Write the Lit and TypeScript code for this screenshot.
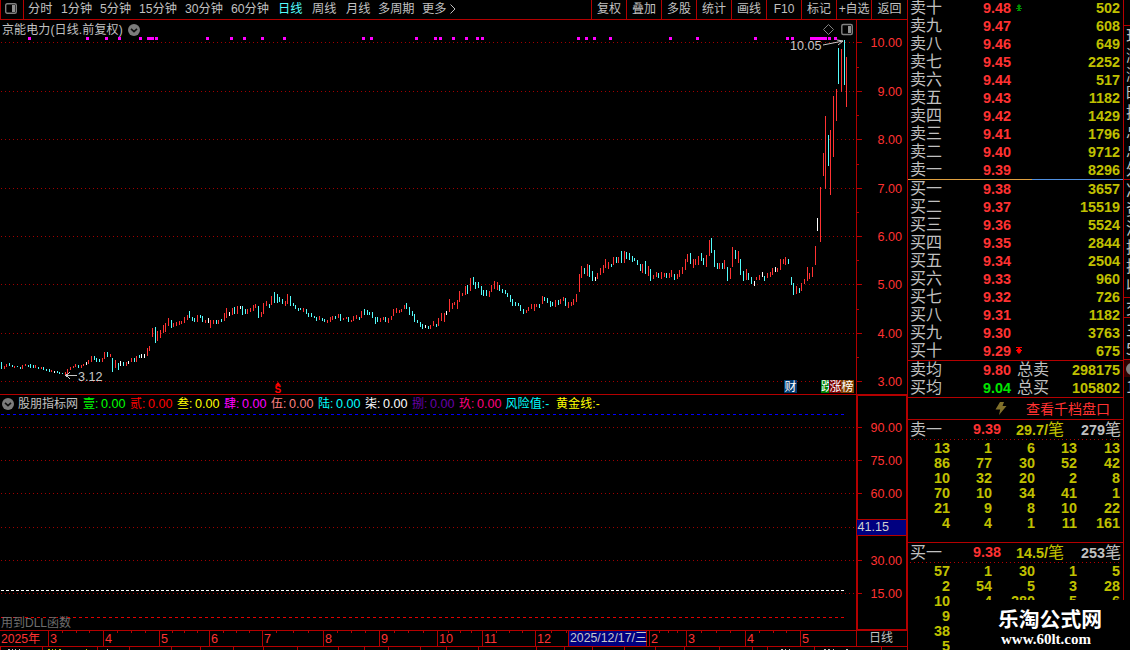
import { LitElement, html, svg, css } from "lit";
import { customElement, property } from "lit/decorators.js";
import { classMap } from "lit/directives/class-map.js";

// x, top, bottom, kind: r = up, c = down, w = flat
const BARS = `
1,362,369,c 4,366,369,r 6,364,367,r 9,363,366,c 12,365,367,c 14,366,368,r 17,366,367,c 20,367,369,c
22,365,369,r 25,364,366,r 28,365,367,c 30,364,368,c 33,365,368,c 35,365,368,r 38,367,369,c 41,367,369,r
43,367,370,c 46,369,371,c 49,369,372,c 51,370,372,r 54,371,373,w 57,371,373,c 59,372,374,c 62,373,374,c
65,372,375,r 67,369,374,r 70,367,370,r 73,366,368,r 75,364,367,r 78,365,368,c 81,365,368,r 83,364,366,r
86,362,365,w 88,360,364,r 91,356,362,r 94,356,360,c 96,358,362,c 99,359,362,c 102,358,362,r 104,352,359,r
107,352,357,c 110,354,357,r 112,358,372,c 115,360,368,r 118,363,370,c 120,361,366,w 123,362,366,c
126,362,366,r 128,361,364,w 131,358,362,r 134,358,362,c 136,356,362,r 139,355,358,c 141,354,358,w
144,354,358,w 147,348,356,r 149,346,351,r 152,328,337,r 155,327,343,c 157,331,341,r 160,330,338,r
163,325,333,r 165,323,332,r 168,318,326,r 171,320,328,c 173,323,327,r 176,322,326,r 179,321,325,r
181,321,324,r 184,317,323,r 187,315,320,r 189,311,318,c 192,317,321,c 194,318,322,c 197,315,322,r
200,315,318,c 202,316,322,c 205,320,323,r 208,318,323,w 210,320,328,r 213,320,324,r 216,320,324,c
218,320,324,r 221,319,322,c 224,313,321,r 226,308,318,r 229,312,316,w 232,308,315,r 234,307,314,c
237,306,314,r 240,306,309,w 242,306,315,c 245,309,314,c 247,309,314,r 250,308,312,r 253,305,311,r
255,304,308,r 258,306,318,c 261,312,317,r 263,303,314,r 266,301,306,r 269,304,308,c 271,296,305,r
274,292,303,c 277,294,303,c 279,297,302,c 282,299,304,c 285,301,306,r 287,294,304,r 290,296,306,c
293,303,306,c 295,305,309,c 298,308,311,c 300,308,310,c 303,308,312,r 306,309,314,c 308,313,317,c
311,313,317,c 314,316,318,c 316,317,321,c 319,316,320,r 322,318,321,c 324,319,322,c 327,320,323,r
330,317,322,r 332,316,320,r 335,316,319,c 338,314,318,r 340,314,321,c 343,318,320,r 346,317,319,r
348,317,322,c 351,320,322,r 353,316,321,r 356,315,319,r 359,317,320,c 361,311,318,r 364,309,315,c
367,310,315,c 369,312,315,c 372,312,318,c 375,317,324,c 377,317,322,c 380,318,322,r 383,317,320,r
385,317,322,c 388,318,323,r 391,316,320,r 393,309,316,r 396,308,313,r 399,310,313,r 401,309,312,r
404,305,309,r 406,303,309,c 409,307,315,c 412,311,316,c 414,314,322,c 417,320,323,c 420,322,327,c
422,324,329,c 425,325,328,w 428,326,329,c 430,325,329,r 433,321,326,r 436,324,327,c 438,318,326,r
441,313,321,r 444,313,322,r 446,311,315,w 449,299,312,r 452,303,309,r 454,302,305,r 457,300,309,r
459,291,302,r 462,293,296,r 465,286,295,r 467,285,294,c 470,278,291,r 473,277,285,c 475,282,289,c
478,282,288,c 481,286,295,c 483,290,296,c 486,290,296,c 489,291,297,r 491,285,292,r 494,281,289,r
497,282,290,r 499,285,291,c 502,289,293,c 505,290,294,c 507,293,297,c 510,295,302,c 512,299,306,c
515,302,306,c 518,303,306,c 520,305,311,c 523,309,314,c 526,310,313,r 528,307,311,r 531,304,309,r
534,304,311,r 536,304,307,r 539,304,308,c 542,296,304,r 544,297,301,c 547,298,303,c 550,301,307,c
552,302,306,c 555,300,307,r 558,300,305,c 560,299,304,r 563,297,301,r 565,298,306,c 568,302,308,r
571,302,306,r 573,299,305,r 576,294,302,r 579,274,292,r 581,266,278,r 584,268,274,c 587,264,276,r
589,265,277,c 592,271,281,c 595,277,281,w 597,273,279,r 600,268,275,r 603,265,273,r 605,259,268,r
608,262,269,r 611,264,267,c 613,257,265,r 616,257,263,c 618,257,263,r 621,251,263,c 624,251,263,r
626,252,259,c 629,253,260,c 632,256,262,c 634,258,261,c 637,260,265,c 640,264,271,c 642,264,273,r
645,261,274,c 648,266,276,r 650,269,281,c 653,275,279,r 656,272,277,r 658,273,278,c 661,272,279,r
664,273,277,r 666,273,278,c 669,273,278,r 671,270,277,r 674,274,280,c 677,274,279,r 679,270,277,r
682,267,274,r 685,259,270,r 687,254,262,r 690,253,264,c 693,259,268,r 695,259,265,r 698,256,265,r
701,253,261,c 703,258,265,c 706,255,267,r 709,240,256,r 711,238,253,c 714,250,267,c 717,263,269,c
719,263,269,r 722,263,269,c 724,260,269,r 727,267,281,c 730,268,279,r 732,247,267,r 735,250,259,c
738,251,263,r 740,259,275,c 743,271,281,c 746,269,280,r 748,273,280,c 751,277,284,c 754,281,286,w
756,277,280,r 759,275,280,r 762,272,277,w 764,276,281,c 767,273,278,r 770,272,277,r 772,268,275,r
775,267,272,w 777,268,272,r 780,259,270,r 783,259,264,r 785,257,265,r 788,259,264,c 791,277,285,c
793,283,295,c 796,286,294,r 799,288,293,c 801,283,291,r 804,279,284,r 807,267,281,r 809,273,279,r
812,267,277,r 815,246,265,r 817,218,231,w 820,187,242,r 823,153,176,r 825,116,189,r 828,135,166,c
830,130,195,r 833,96,157,r 836,89,121,r 838,48,84,c 841,49,92,r 844,40,85,c 846,57,107,r`;

const bars = BARS.trim()
  .split(/\s+/)
  .map((b) => b.split(","))
  .map(([x, top, bottom, kind]) => ({ x: +x, top: +top, bottom: +bottom, kind }));

const marks = [
  29, 87, 106, 119, 140, 148, 150, 152, 156, 207, 231, 244, 262, 284, 363, 371,
  416, 435, 440, 453, 466, 477, 482, 578, 586, 594, 610, 670, 697, 755, 787,
  792, 811, 814, 817, 820, 823, 825, 829, 835,
];

const priceScale: [string, number][] = [
  ["10.00", 42], ["9.00", 91], ["8.00", 139], ["7.00", 188],
  ["6.00", 236], ["5.00", 284], ["4.00", 333], ["3.00", 381],
];
const priceMinor = [67, 115, 164, 212, 260, 309, 357];
const lowScale: [string, number][] = [
  ["90.00", 427], ["75.00", 460], ["60.00", 493], ["", 527],
  ["30.00", 560], ["15.00", 593],
];

const legend = [
  ["壹", "#00ff00"], ["贰", "#ff0000"], ["叁", "#ffff00"],
  ["肆", "#ff00ff"], ["伍", "#ff8080"], ["陆", "#00ffff"],
  ["柒", "#ffffff"], ["捌", "#6a00a8"], ["玖", "#ff0080"],
];

const months: [string, number][] = [
  ["2025年", 48], ["3", 55], ["4", 56], ["5", 50], ["6", 53], ["7", 61],
  ["8", 56], ["9", 58], ["10", 45], ["11", 53], ["12", 33],
  ["2025/12/17/三", 81], ["2", 37], ["3", 59], ["4", 55], ["5", 56],
];
const axisTicks = [
  62, 76, 89, 117, 131, 145, 172, 184, 197, 223, 236, 249, 276, 293, 308, 337,
  351, 365, 394, 408, 423, 448, 460, 471, 496, 509, 522, 551, 566, 659, 668,
  677, 701, 716, 730, 759, 773, 786,
];
const footTicks = [
  0, 42, 97, 129, 171, 200, 233, 263, 297, 338, 364, 388, 420, 446, 478, 536,
  564, 592, 624, 655, 684, 719, 752, 767, 814, 881,
];

@customElement("stock-chart")
export class StockChart extends LitElement {
  static styles = css`
    :host {
      display: grid;
      width: 907px;
      height: 610px;
    }
    svg.plot {
      grid-area: 1 / 1;
      display: block;
      shape-rendering: crispEdges;
    }
    text {
      font: 12.6px "Liberation Sans", "Noto Sans CJK SC", sans-serif;
    }
    .r { fill: #ff3232; }
    .c { fill: #54fcfc; }
    .w { fill: #ffffff; }
    .frame { stroke: #b40000; fill: none; }
    .dots { stroke: #a00000; stroke-dasharray: 1 3; }
    .blue { stroke: #0000ff; stroke-dasharray: 3 3; }
    .white { stroke: #ffffff; stroke-dasharray: 3 2; }
    .red { stroke: #e00000; stroke-dasharray: 3 3; }
    .mark { fill: #ff00ff; }
    .scale { fill: #ff3232; text-anchor: end; }
    .note { fill: #c8c8c8; }
    .lead { stroke: #c8c8c8; fill: none; }
    .tool { stroke: #808080; fill: none; shape-rendering: auto; }
    .badge { fill: #fff; font-size: 12px; }
    .bonus { fill: #ff0000; font-weight: 700; font-size: 10px; }
    .soft { shape-rendering: auto; }
    .dim { fill: #6e6e6e; font-size: 12px; }
    .heading,
    .legend {
      grid-area: 1 / 1;
      display: flex;
      align-items: center;
      align-self: start;
      height: 18px;
      white-space: nowrap;
      color: #c0c0c0;
      font: 12px/18px "Liberation Sans", "Noto Sans CJK SC", sans-serif;
      z-index: 1;
    }
    .heading {
      padding: 1px 0 0 2px;
      gap: 5px;
      letter-spacing: 0.12px;
    }
    .legend {
      margin-top: 374px;
      padding: 1px 0 0 2px;
      height: 17px;
    }
    .source {
      width: 65px;
      padding-left: 4px;
    }
    .item {
      width: 47px;
      font-size: 12.6px;
      display: flex;
    }
    .item b {
      font-weight: 400;
      font-size: 12px;
      width: 18px;
    }
    .extra {
      width: 51px;
      margin-left: -0.5px;
      letter-spacing: 0.1px;
    }
    .chevron {
      flex: none;
    }
  `;

  chevron() {
    return html`<svg class="chevron" width="12" height="12" viewBox="0 0 12 12">
      <circle cx="6" cy="6" r="6" fill="#7c7c7c" />
      <path d="M3 4.8 L6 7.6 L9 4.8" fill="none" stroke="#101010" stroke-width="1.6" />
    </svg>`;
  }

  scale([label, y]: [string, number]) {
    return svg`
      <line class="dots" x1="1" x2="856" y1=${y + 0.5} y2=${y + 0.5} />
      <rect fill="#b40000" x="857" y=${y} width="5" height="1" />
      <text class="scale" x="902" y=${y + 5}>${label}</text>`;
  }

  render() {
    return html`
      <svg class="plot" width="907" height="610" viewBox="0 20 907 610">
        ${priceScale.map((s) => this.scale(s))}
        ${lowScale.map((s) => this.scale(s))}
        ${priceMinor.map((y) => svg`<rect fill="#b40000" x="857" y=${y} width="2" height="1" />`)}
        ${marks.map((x) => svg`<rect class="mark" x=${x - 1} y="37" width="3" height="3" />`)}
        ${bars.map(
          (b) => svg`<rect class=${b.kind} x=${b.x} y=${b.top} width="1" height=${b.bottom - b.top} />`
        )}

        <line class="blue" x1="1" x2="845" y1="414.5" y2="414.5" />
        <line class="white" x1="1" x2="845" y1="590.5" y2="590.5" />
        <line class="red" x1="1" x2="845" y1="617.5" y2="617.5" />

        <path class="frame" d="M0 394.5 H907 M856.5 20 V630" />
        <path class="frame" d="M857.5 395.5 H906.5 V629.5 H857.5 Z" />

        <text class="note" x="790" y="50">10.05</text>
        <path class="lead soft" d="M823 45 L843 41 M837 40 L843 41 L838 45" />
        <text class="note" x="78" y="381">3.12</text>
        <path class="lead" d="M66 375.5 H77 M70 372 L66 375.5 L70 379" />

        <path class="tool" d="M828.5 24.5 L833.5 29.5 L828.5 34.5 L823.5 29.5 Z" />
        <rect class="tool" x="841.8" y="24.5" width="10.5" height="10" rx="1.5" stroke-width="1.4" />
        <rect x="848" y="26" width="3" height="7" fill="#909090" />

        <path class="soft" d="M278 382 L281 385.5 H275 Z" fill="#ff0000" />
        <text class="bonus" x="274.5" y="393">S</text>

        <rect x="784" y="380" width="13" height="13" fill="#003a70" />
        <text class="badge" x="784.5" y="391">财</text>
        <svg x="821" y="380" width="9" height="13">
          <rect width="9" height="13" fill="#008000" />
          <text class="badge" x="0" y="11">跌</text>
        </svg>
        <rect x="829" y="380" width="13" height="13" fill="#7c0000" />
        <text class="badge" x="829.5" y="391">涨</text>
        <rect x="841" y="380" width="13" height="13" fill="#804000" />
        <text class="badge" x="841.5" y="391">榜</text>

        <rect x="857" y="519" width="49" height="16" fill="#000080" />
        <path class="frame" d="M857 519.5 H906 M857 535.5 H906" />
        <text x="857.5" y="531" fill="#d0d0d0">41.15</text>
        <text class="dim" x="1" y="627">用到DLL函数</text>
      </svg>
      <div class="heading">京能电力(日线.前复权)${this.chevron()}</div>
      <div class="legend">
        ${this.chevron()}
        <span class="source">股朋指标网</span>
        ${legend.map(
          ([name, color]) =>
            html`<span class="item" style="color:${color}"><b>${name}:</b>0.00</span>`
        )}
        <span class="extra" style="color:#00ffff">风险值:-</span>
        <span class="extra" style="color:#ffff00">黄金线:-</span>
      </div>
    `;
  }
}

@customElement("time-axis")
export class TimeAxis extends LitElement {
  static styles = css`
    :host {
      display: grid;
      width: 907px;
      height: 20px;
      font: 12.6px/16px "Liberation Sans", "Noto Sans CJK SC", sans-serif;
    }
    .months {
      grid-area: 1 / 1;
      display: flex;
      box-sizing: border-box;
      height: 17px;
      border-top: 1px solid #b40000;
      border-bottom: 1px solid #b40000;
      color: #ff3232;
      white-space: nowrap;
    }
    .month {
      box-sizing: border-box;
      height: 15px;
      line-height: 17px;
      padding-left: 1px;
      border-left: 1px solid #b40000;
    }
    .month:first-child {
      border-left: 0;
      font-size: 12.2px;
    }
    .month.current {
      color: #c8c8c8;
      line-height: 15px;
    }
    .current span {
      display: block;
      width: 78px;
      height: 15px;
      margin-left: -1px;
      padding-left: 1px;
      box-sizing: border-box;
      background: #000080;
      border-right: 1px solid #b40000;
      font-size: 12.3px;
    }
    .period {
      flex: 1;
      box-sizing: border-box;
      border-left: 1px solid #b40000;
      color: #c0c0c0;
      font-size: 12px;
      line-height: 15px;
      padding-left: 12px;
    }
    svg {
      grid-area: 1 / 1;
      display: block;
      fill: #b40000;
      shape-rendering: crispEdges;
    }
  `;

  render() {
    return html`
      <div class="months">
        ${months.map(
          ([label, width]) => html`<div
            class=${classMap({ month: true, current: label.length > 6 })}
            style="width:${width}px"
          ><span>${label}</span></div>`
        )}
        <div class="period">日线</div>
      </div>
      <svg width="907" height="20">
        ${axisTicks.map((x) => svg`<rect x=${x} y="1" width="1" height="2" />`)}
        ${footTicks.map((x) => svg`<rect x=${x} y="17" width="1" height="3" />`)}
        <path fill="#c0c0c0" d="M8 19h2v1h-2z M12 19h1v1h-1z M15 19h1v1h-1z M19 19h1v1h-1z M107 19h1v1h-1z M781 19h2v1h-2z M785 19h1v1h-1z M789 19h1v1h-1z M824 19h2v1h-2z M828 19h2v1h-2z M833 19h1v1h-1z M846 19h2v1h-2z" />
        <path fill="#c0c000" d="M48 19h2v1h-2z M52 19h1v1h-1z M55 19h1v1h-1z M59 19h2v1h-2z M86 19h1v1h-1z" />
      </svg>
    `;
  }
}

interface Level {
  name: string;
  price: string;
  volume: number;
}

const digits = [..."一二三四五六七八九十"];
const asks: Level[] = [502, 608, 649, 2252, 517, 1182, 1429, 1796, 9712, 8296].map(
  (volume, i) => ({ name: "卖" + digits[9 - i], price: (9.48 - i / 100).toFixed(2), volume })
);
const bids: Level[] = [3657, 15519, 5524, 2844, 2504, 960, 726, 1182, 3763, 675].map(
  (volume, i) => ({ name: "买" + digits[i], price: (9.38 - i / 100).toFixed(2), volume })
);

const askQueue = [
  13, 1, 6, 13, 13, 86, 77, 30, 52, 42, 10, 32, 20, 2, 8, 70, 10, 34, 41, 1,
  21, 9, 8, 10, 22, 4, 4, 1, 11, 161,
];
const bidQueue = [
  57, 1, 30, 1, 5, 2, 54, 5, 3, 28, 10, 4, 280, 5, 6, 9, "", "", "", "", 38,
  "", "", "", "", 5, "", "", "", "",
];

@customElement("order-book")
export class OrderBook extends LitElement {
  static styles = css`
    :host {
      display: block;
      box-sizing: border-box;
      width: 217px;
      height: 650px;
      overflow: hidden;
      border-left: 1px solid #b40000;
      border-right: 1px solid #b40000;
      color: #c0c0c0;
      font: 16px/18px "Liberation Sans", "Noto Sans CJK SC", sans-serif;
      white-space: nowrap;
    }
    .asks {
      margin-top: -1px;
    }
    .row {
      display: grid;
      grid-template-columns: 73px 36px 1fr;
      height: 18px;
      padding: 0 3px 0 2px;
    }
    .num {
      font-size: 14.4px;
      font-weight: 700;
    }
    .price { color: #ff3232; }
    .green { color: #00e600; }
    .volume {
      color: #c0c000;
      text-align: right;
    }
    .split {
      height: 1px;
      background: linear-gradient(90deg, #e0a040 124px, #5090e0 124px);
    }
    .rule {
      height: 1px;
      background: #b40000;
    }
    .row.total {
      grid-template-columns: 73px 34px 34px 1fr;
    }
    .flag {
      float: left;
      margin: 5px 0 0 -3px;
    }
    .link {
      display: flex;
      align-items: center;
      height: 21px;
      padding-left: 86px;
      gap: 19px;
      color: #ff3232;
      font-size: 14px;
    }
    .queue-head {
      display: grid;
      grid-template-columns: 63px 43px 1fr auto;
      height: 20px;
      line-height: 19px;
      padding: 0 2px;
      background: repeating-linear-gradient(90deg, #b40000 0 1px, transparent 1px 4px) 2px 100% / 211px 1px no-repeat;
    }
    .queue-head .avg {
      color: #c0c000;
    }
    .queue-head small {
      font-size: 14.4px;
      font-weight: 700;
    }
    .queue {
      display: grid;
      grid-template-columns: 42px 42px 43px 42px 43px;
      grid-auto-rows: 15px;
      height: 101px;
      padding-top: 1px;
      box-sizing: content-box;
      line-height: 15px;
      color: #c0c000;
      text-align: right;
    }
  `;

  row(l: Level) {
    const up = l.price === "9.48";
    const down = l.price === "9.29";
    return html`<div class="row">
      <span>${l.name}</span>
      <span class="num price">${l.price}</span>
      <span class="num volume">
        ${up || down
          ? html`<svg class="flag" width="6" height="8" viewBox="0 0 6 8">
              ${up
                ? svg`<path fill="#009000" d="M3 0 L5 2 V3 H4 V4 H6 V5 H4 V6 H5 V7 H1 V6 H2 V5 H0 V4 H2 V3 H1 V2 Z" />`
                : svg`<path fill="#ff0000" d="M0 0 H6 V1 H4 V2 H5 V3 H6 V4 H5 V5 L3 7 L1 5 V4 H0 V3 H1 V2 H2 V1 H0 Z" />`}
            </svg>`
          : ""}${l.volume}
      </span>
    </div>`;
  }

  queueHead(name: string, price: string, avg: string, count: number) {
    return html`<div class="queue-head">
      <span>${name}</span>
      <span class="num price">${price}</span>
      <span class="avg"><small>${avg}/</small>笔</span>
      <span><small>${count}</small>笔</span>
    </div>`;
  }

  render() {
    return html`
      <div class="asks">${asks.map((l) => this.row(l))}</div>
      <div class="split"></div>
      <div class="bids">${bids.map((l) => this.row(l))}</div>
      <div class="rule"></div>
      <div class="row total">
        <span>卖均</span><span class="num price">9.80</span><span>总卖</span>
        <span class="num volume">298175</span>
      </div>
      <div class="row total">
        <span>买均</span><span class="num green">9.04</span><span>总买</span>
        <span class="num volume">105802</span>
      </div>
      <div class="rule"></div>
      <div class="link">
        <svg width="13" height="13" viewBox="0 0 13 13">
          <path d="M6 0 H10 L8.5 4 H12.5 L5 13 L6.2 7.5 H1.5 Z" fill="#80702a" />
        </svg>
        <span>查看千档盘口</span>
      </div>
      <div class="rule"></div>
      ${this.queueHead("卖一", "9.39", "29.7", 279)}
      <div class="queue">${askQueue.map((n) => html`<span class="num">${n}</span>`)}</div>
      <div class="rule"></div>
      ${this.queueHead("买一", "9.38", "14.5", 253)}
      <div class="queue">${bidQueue.map((n) => html`<span class="num">${n}</span>`)}</div>
    `;
  }
}

const periods = [
  "分时", "1分钟", "5分钟", "15分钟", "30分钟", "60分钟", "日线", "周线",
  "月线", "多周期", "更多",
];
const actions = ["复权", "叠加", "多股", "统计", "画线", "F10", "标记", "+自选", "返回"];

@customElement("tool-bar")
export class ToolBar extends LitElement {
  @property() active = "日线";

  static styles = css`
    :host {
      display: flex;
      box-sizing: border-box;
      width: 907px;
      height: 20px;
      border-bottom: 1px solid #b40000;
      color: #c0c0c0;
      font: 12px/19px "Liberation Sans", "Noto Sans CJK SC", sans-serif;
      white-space: nowrap;
    }
    .layout {
      box-sizing: border-box;
      width: 24px;
      padding: 3px 0 0 4px;
      border-left: 1px solid #b40000;
      border-right: 1px solid #b40000;
    }
    .layout svg,
    .more {
      display: block;
    }
    .periods {
      display: grid;
      grid-template-columns: 33px 39px 39px 46px 46px 47px 34px 34px 32px 44px 28px auto;
      padding-left: 4px;
      flex: 1;
      justify-content: start;
      font-size: 12.2px;
    }
    .active {
      color: #54fcfc;
    }
    .more {
      margin-top: 4px;
    }
    .action {
      box-sizing: border-box;
      width: 35px;
      border-left: 1px solid #b40000;
      text-align: center;
    }
    .action:nth-last-child(2) {
      letter-spacing: -0.1px;
    }
    .action:last-child {
      width: 36px;
    }
  `;

  render() {
    return html`
      <div class="layout">
        <svg width="12" height="11" viewBox="0 0 12 11">
          <rect x="0.7" y="0.7" width="10.6" height="9.6" rx="1.5" fill="none" stroke="#808080" stroke-width="1.4" />
          <rect x="7" y="2" width="3" height="7" fill="#909090" />
        </svg>
      </div>
      <div class="periods">
        ${periods.map(
          (p) => html`<span class=${classMap({ active: p === this.active })}>${p}</span>`
        )}
        <svg class="more" width="6" height="10" viewBox="0 0 6 10">
          <path d="M0.5 0.5 L5 5 L0.5 9.5" fill="none" stroke="#c0c0c0" />
        </svg>
      </div>
      ${actions.map((a) => html`<div class="action">${a}</div>`)}
    `;
  }
}

@customElement("app-root")
export class AppRoot extends LitElement {
  static styles = css`
    :host {
      display: flex;
      position: relative;
      width: 1130px;
      height: 650px;
      overflow: hidden;
      background: #000;
    }
    .left {
      display: flex;
      flex-direction: column;
      width: 907px;
    }
    .side {
      width: 6px;
      overflow: hidden;
      color: #c0c0c0;
      font: 16px/19px "Noto Sans CJK SC", sans-serif;
    }
    .side div {
      box-sizing: border-box;
      padding-left: 2px;
      white-space: nowrap;
    }
    .blank { height: 25px; }
    .upper {
      height: 154px;
      border-top: 1px solid #b40000;
    }
    .lower {
      height: 118px;
      border-top: 1px solid #b40000;
    }
    .deal {
      height: 20px;
      border-top: 1px solid #b40000;
    }
    .side .rate {
      height: 42px;
      border-top: 1px solid #b40000;
      line-height: 20px;
    }
    .side .tab {
      height: 18px;
      border-top: 1px solid #b40000;
      background: #300000;
      padding: 3px 0 0 2px;
      line-height: 0;
    }
    .mark {
      position: absolute;
      left: 950px;
      top: 600px;
      width: 180px;
      height: 50px;
      box-sizing: border-box;
      padding: 6px 0 0 48px;
      background: #000;
      color: #fff;
      white-space: nowrap;
    }
    .mark .name {
      font: 700 20.8px/24px "Noto Sans CJK SC", sans-serif;
    }
    .mark .url {
      padding-left: 3px;
      font: 700 15px/18px "Liberation Serif", serif;
    }
  `;

  render() {
    return html`
      <div class="left">
        <tool-bar></tool-bar>
        <stock-chart></stock-chart>
        <time-axis></time-axis>
      </div>
      <order-book></order-book>
      <div class="side">
        <div class="blank"></div>
        <div class="upper">现<br />涨<br />涨<br />昨<br />换<br />总<br />总<br />外</div>
        <div class="lower">净<br />资<br />流<br />换<br />换<br />收</div>
        <div class="deal">交</div>
        <div class="rate">主<br />5</div>
        <div class="tab">
          <svg width="12" height="12"><circle cx="6" cy="6" r="6" fill="#808080" /></svg>
        </div>
        <div>1</div>
      </div>
      <div class="mark">
        <div class="name">乐淘公式网</div>
        <div class="url">www.60lt.com</div>
      </div>
    `;
  }
}
